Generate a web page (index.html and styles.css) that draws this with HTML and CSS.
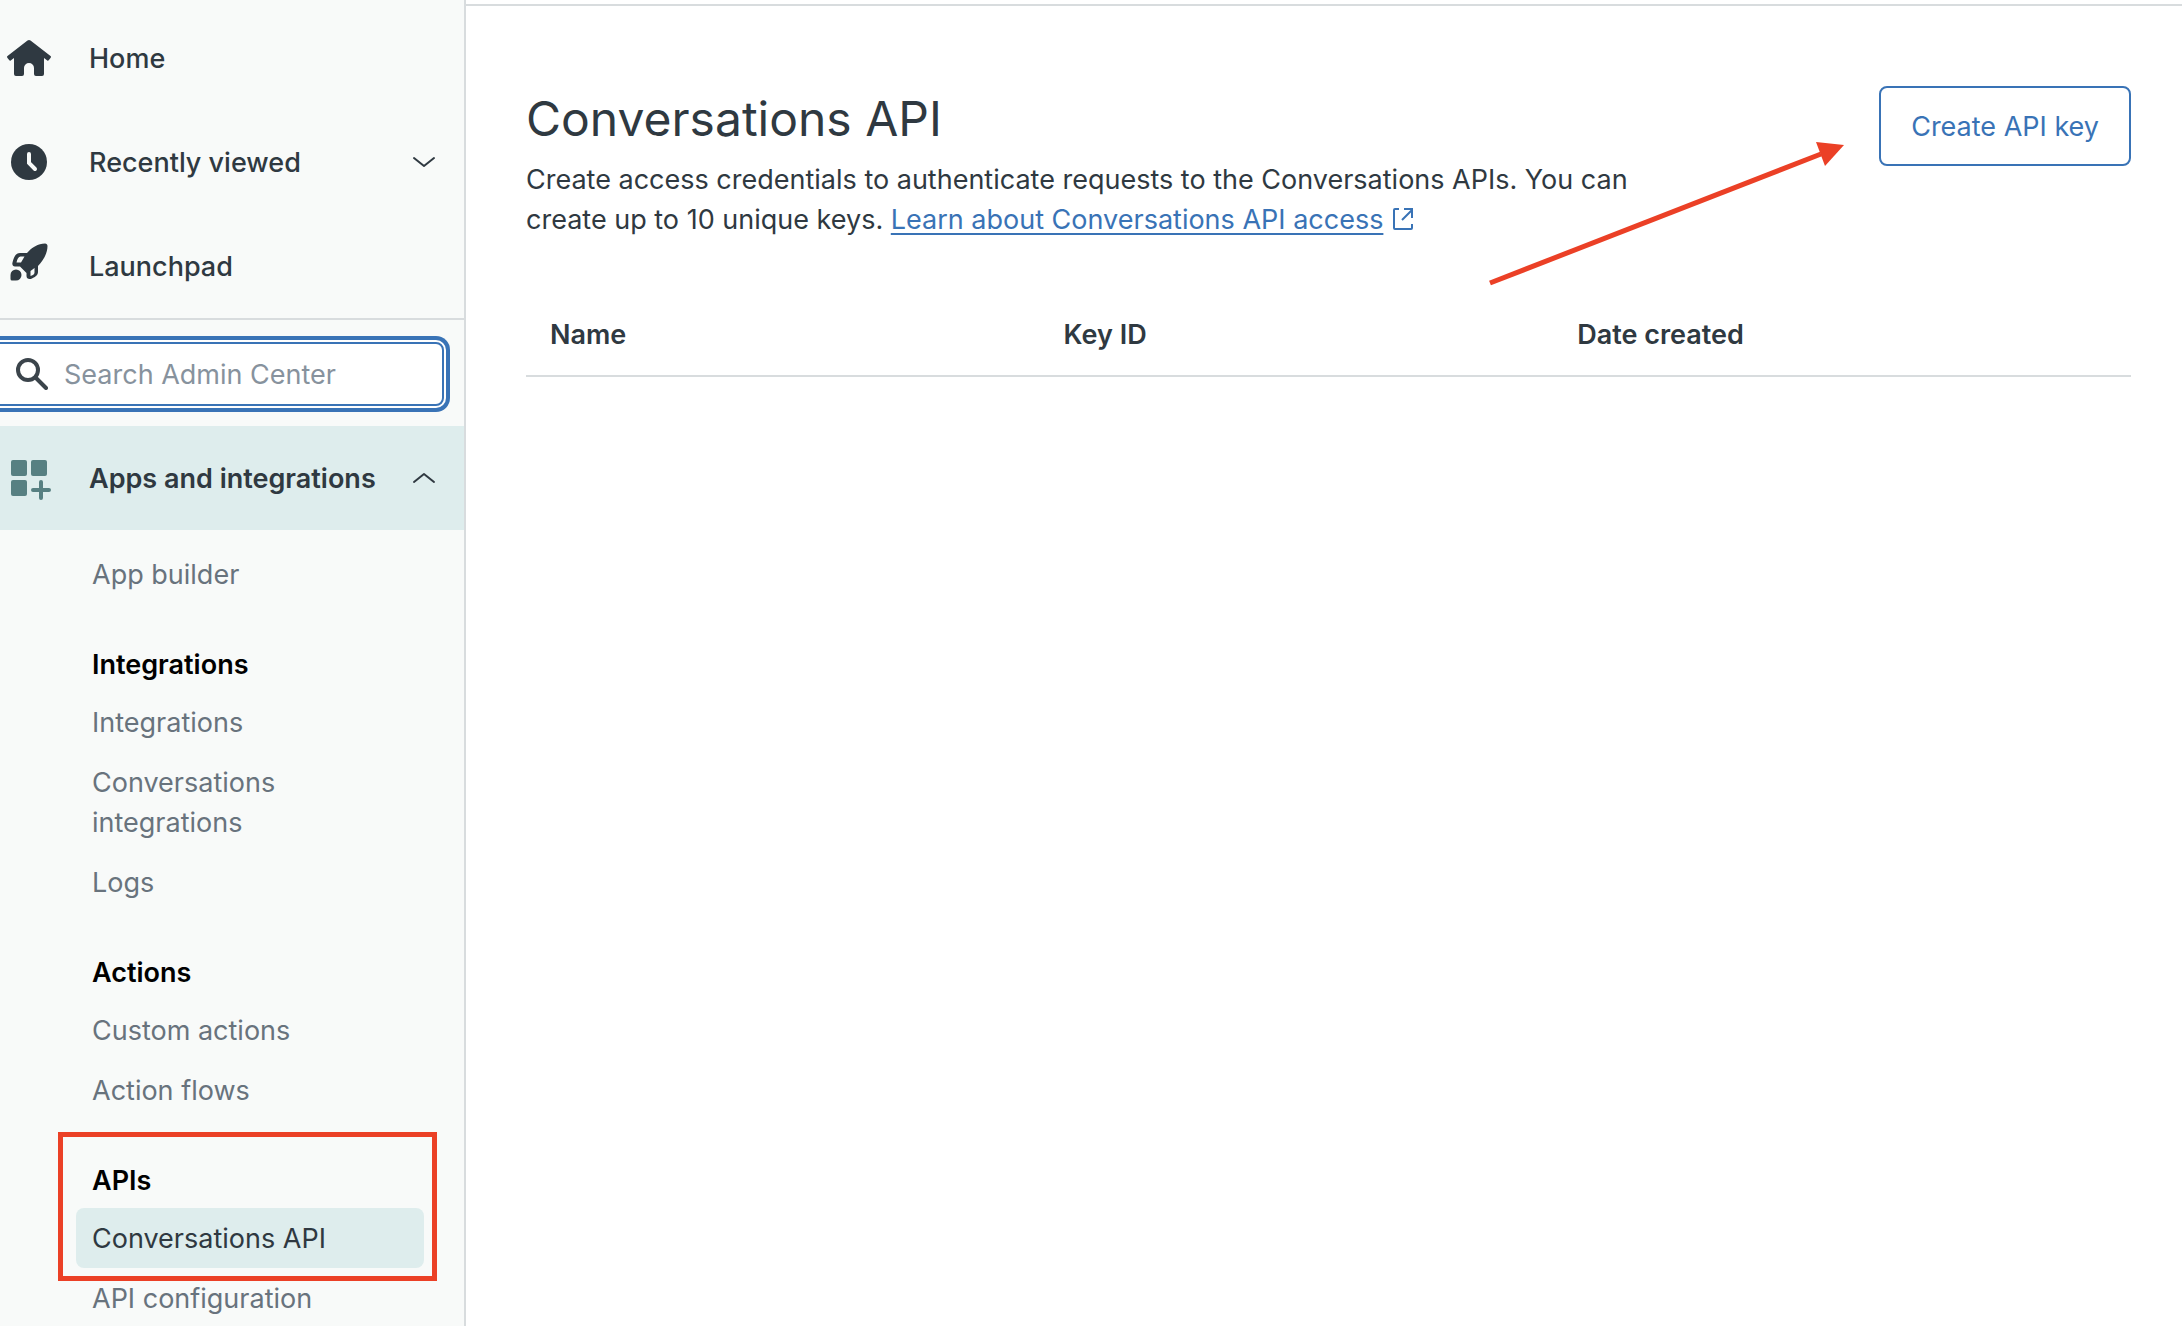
FILE: index.html
```html
<!DOCTYPE html>
<html lang="en">
  <head>
    <meta charset="utf-8">
    <title>Conversations API</title>
    <link rel="stylesheet" href="styles.css">
  </head>
  <body>
    <nav class="sidebar">
      <a class="nav-row" href="#">
        <svg class="nav-icon" viewBox="0 0 48 48"><path d="M22.5 6.600a2.400 2.400 0 0 1 3 0l20 15.400a1.200 1.200 0 0 1 .2 1.700l-2 2.500a1 1 0 0 1-1.400.2L39 24v16a2 2 0 0 1-2 2h-6a2 2 0 0 1-2-2v-6a5 5 0 0 0-10 0v6a2 2 0 0 1-2 2h-6a2 2 0 0 1-2-2V24l-3.300 2.400a1 1 0 0 1-1.400-.2l-2-2.500a1.200 1.200 0 0 1 .2-1.700z"/></svg>
        <span>Home</span>
      </a>
      <button class="nav-row" type="button">
        <svg class="nav-icon" viewBox="0 0 48 48"><circle cx="24" cy="24" r="18"/><path class="hands" d="M24 16v9l6 6"/></svg>
        <span>Recently viewed</span>
        <svg class="chevron" viewBox="0 0 24 14"><path d="M2 3l10 8 10-8"/></svg>
      </button>
      <a class="nav-row" href="#">
        <svg class="nav-icon" viewBox="0 0 48 48"><path d="M40 1.600c1.500 0 2.500.9 2.500 2.400 0 7-4 14.500-9.500 20V30c0 3-2.500 5-6 6.400-3 1.200-5.500.3-5.500-2.400V31l-6.500-6.500H10c-2 0-3-1.500-2.600-3.500C8.500 15.500 10.500 11 15 11h7C27 5.500 33 1.600 40 1.600zM11.500 20.500h4.500l3.500-6h-4c-2 0-3.200 2.500-4 6zM25.500 29v5c3-1 4-2 4-3.500V26zM11 27.500a5.500 5.500 0 1 1 0 11H7a1.500 1.500 0 0 1-1.500-1.500v-4a5.500 5.500 0 0 1 5.500-5.500z" fill-rule="evenodd"/></svg>
        <span>Launchpad</span>
      </a>

      <div class="search">
        <label class="search-box">
          <svg class="search-icon" viewBox="0 0 32 32"><circle cx="12" cy="12" r="10"/><path d="M19.500 19.500L30 30"/></svg>
          <input type="text" placeholder="Search Admin Center" aria-label="Search Admin Center">
        </label>
      </div>

      <button class="nav-row open" type="button">
        <svg class="nav-icon" viewBox="0 0 48 48"><rect x="6" y="6" width="16" height="16" rx="2"/><rect x="26" y="6" width="16" height="16" rx="2"/><rect x="6" y="26" width="16" height="16" rx="2"/><path class="plus" d="M36 28v16M28 36h16"/></svg>
        <span>Apps and integrations</span>
        <svg class="chevron" viewBox="0 0 24 14"><path d="M2 11l10-8 10 8"/></svg>
      </button>

      <div class="subnav">
        <a href="#">App builder</a>
        <section>
          <h2>Integrations</h2>
          <a href="#">Integrations</a>
          <a href="#">Conversations<br>integrations</a>
          <a href="#">Logs</a>
        </section>
        <section>
          <h2>Actions</h2>
          <a href="#">Custom actions</a>
          <a href="#">Action flows</a>
        </section>
        <section class="apis">
          <h2>APIs</h2>
          <a class="current" href="#">Conversations API</a>
          <a href="#">API configuration</a>
          <div class="highlight"></div>
        </section>
      </div>
    </nav>

    <main>
      <header>
        <div class="intro">
          <h1>Conversations API</h1>
          <p>Create access credentials to authenticate requests to the Conversations APIs. You can create up to 10 unique keys. <a href="#">Learn about Conversations API access</a> <svg class="external" viewBox="0 0 22 24"><path d="M7 2H3a1 1 0 0 0-1 1v18a1 1 0 0 0 1 1h16a1 1 0 0 0 1-1v-4M10 13L20 3M12 2h8v9"/></svg></p>
        </div>
        <button class="create" type="button">Create API key</button>
        <svg class="arrow" viewBox="0 0 356 146"><path d="M1 141L332 12" stroke="#eb4026" stroke-width="5"/><path d="M327 0l28 3-19 21z" fill="#eb4026"/></svg>
      </header>

      <table>
        <thead>
          <tr>
            <th>Name</th>
            <th>Key ID</th>
            <th>Date created</th>
            <td></td>
          </tr>
        </thead>
      </table>
    </main>
  </body>
</html>
```
FILE: styles.css
```css
* { box-sizing: border-box; }
html, body { height: 100%; }
body { margin: 0; display: flex; overflow: hidden; font: 27px/40px Inter, "Liberation Sans", sans-serif; color: #2f3941; background: #fff; }
button, input { font: inherit; color: inherit; }
h1, h2, p { margin: 0; }

.sidebar { flex: none; width: 466px; padding-top: 6px; overflow: hidden; background: #f8faf9; border-right: 2px solid #d8dcde; }
.nav-row { display: flex; align-items: center; gap: 36px; width: 100%; height: 104px; padding: 0 28px 0 5px; border: none; background: none; color: #2f3941; font-weight: 500; text-align: left; text-decoration: none; }
.nav-row span { padding-top: 2px; }
.nav-row.open { background: #deeded; font-weight: 600; }
.nav-row.open .nav-icon { fill: #578082; }
.nav-icon { flex: none; width: 48px; height: 48px; fill: #2f3941; }
.hands { fill: none; stroke: #f8faf9; stroke-width: 4; stroke-linecap: round; }
.plus { fill: none; stroke: #578082; stroke-width: 4; stroke-linecap: round; }
.chevron { flex: none; width: 24px; height: 14px; margin-left: auto; fill: none; stroke: #2f3941; stroke-width: 2; stroke-linecap: round; stroke-linejoin: round; }

.search { padding: 22px 20px 20px 0; border-top: 2px solid #d8dcde; }
.search-box { display: flex; align-items: center; gap: 16px; height: 64px; margin-left: -8px; padding-left: 22px; border: 2px solid #3973b6; border-radius: 8px; background: #fff; box-shadow: 0 0 0 2px #fff, 0 0 0 6px #3973b6; }
.search-icon { flex: none; width: 32px; height: 32px; fill: none; stroke: #3b444b; stroke-width: 4; stroke-linecap: round; }
.search input { flex: 1; min-width: 0; padding: 2px 0 0; border: none; outline: none; background: none; }
.search input::placeholder { color: #87929d; opacity: 1; }

.subnav { padding: 14px 40px 0 76px; }
.subnav a { display: block; padding: 11px 16px 9px; border-radius: 8px; color: #68737d; text-decoration: none; }
.subnav a.current { background: #deeded; color: #2f3941; }
.subnav h2 { padding: 41px 16px 7px; color: #000; font-size: 27px; font-weight: 600; }
.apis { position: relative; }
.highlight { position: absolute; top: 12px; left: -18px; right: -13px; height: 149px; border: 5px solid #eb4026; pointer-events: none; }

main { flex: 1; margin-top: 4px; padding: 80px 51px 0 60px; border-top: 2px solid #d8dcde; }
header { position: relative; display: flex; justify-content: space-between; align-items: flex-start; }
.intro { max-width: 1160px; padding-top: 4px; }
h1 { font-size: 48px; font-weight: 400; line-height: 58px; padding-bottom: 12px; }
.intro a { color: #3973b6; text-decoration-thickness: 2px; text-underline-offset: 4px; }
.external { width: 22px; height: 24px; margin-left: 1px; vertical-align: -2px; fill: none; stroke: #3973b6; stroke-width: 2; }
.create { height: 80px; padding: 2px 30px 0; border: 2px solid #3973b6; border-radius: 8px; background: #fff; color: #3973b6; }
.arrow { position: absolute; top: 56px; right: 286px; width: 356px; height: 146px; fill: none; pointer-events: none; }

table { width: 100%; margin-top: 56px; border-collapse: collapse; table-layout: fixed; }
th { width: 32%; padding: 19px 24px 20px; font-weight: 600; text-align: left; }
tr { border-bottom: 2px solid #d8dcde; }
```
